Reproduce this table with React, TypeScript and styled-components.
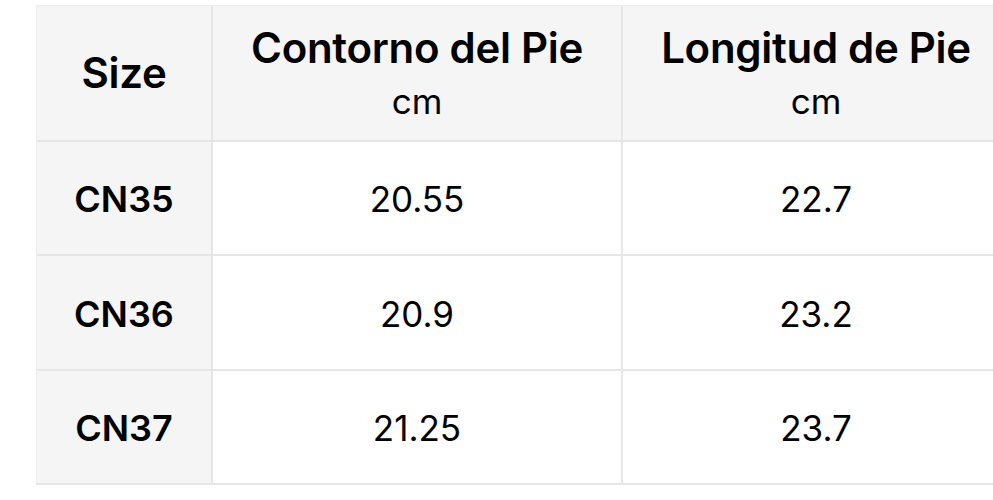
import React from "react";
import styled, { createGlobalStyle } from "styled-components";

const GlobalStyle = createGlobalStyle`
    html, body {
        margin: 0;
        padding: 0;
        background: #ffffff;
        font-family: Inter, "Noto Sans", sans-serif;
        color: #000000;
    }
`;

const Page = styled.div`
    width: 993px;
    height: 500px;
    overflow: hidden;
    padding: 5px 0 0 36px;
    box-sizing: border-box;
`;

const Table = styled.div`
    display: grid;
    grid-template-columns: 176px 410px 388px;
    grid-template-rows: 136px 114px 115px 114px;
    width: 974px;
    border-top: 1px solid #ededed;
    border-left: 1px solid #ededed;
`;

const Cell = styled.div<{ $shaded?: boolean }>`
    display: flex;
    flex-direction: column;
    align-items: center;
    justify-content: center;
    background: ${(p) => (p.$shaded ? "#f5f5f5" : "#ffffff")};
    border-right: 2px solid #e6e6e6;
    border-bottom: 2px solid #e6e6e6;
    box-sizing: border-box;
`;

const HeadTitle = styled.div`
    font-size: 42px;
    font-weight: 600;
    letter-spacing: -0.3px;
    line-height: 54px;
`;

const Unit = styled.div`
    font-size: 35px;
    font-weight: 400;
    line-height: 47px;
    margin-top: 3px;
`;

const SizeLabel = styled.div`
    font-size: 36px;
    font-weight: 600;
    margin-top: 2px;
`;

const Value = styled.div`
    font-size: 35px;
    font-weight: 400;
    margin-top: 2px;
`;

const rows = [
    { size: "CN35", girth: "20.55", length: "22.7" },
    { size: "CN36", girth: "20.9", length: "23.2" },
    { size: "CN37", girth: "21.25", length: "23.7" },
];

export default function App() {
    return (
        <>
            <GlobalStyle />
            <Page>
                <Table>
                    <Cell $shaded>
                        <HeadTitle>Size</HeadTitle>
                    </Cell>
                    <Cell $shaded>
                        <HeadTitle>Contorno del Pie</HeadTitle>
                        <Unit>cm</Unit>
                    </Cell>
                    <Cell $shaded>
                        <HeadTitle>Longitud de Pie</HeadTitle>
                        <Unit>cm</Unit>
                    </Cell>

                    {rows.map((r) => (
                        <React.Fragment key={r.size}>
                            <Cell $shaded>
                                <SizeLabel>{r.size}</SizeLabel>
                            </Cell>
                            <Cell>
                                <Value>{r.girth}</Value>
                            </Cell>
                            <Cell>
                                <Value>{r.length}</Value>
                            </Cell>
                        </React.Fragment>
                    ))}
                </Table>
            </Page>
        </>
    );
}
